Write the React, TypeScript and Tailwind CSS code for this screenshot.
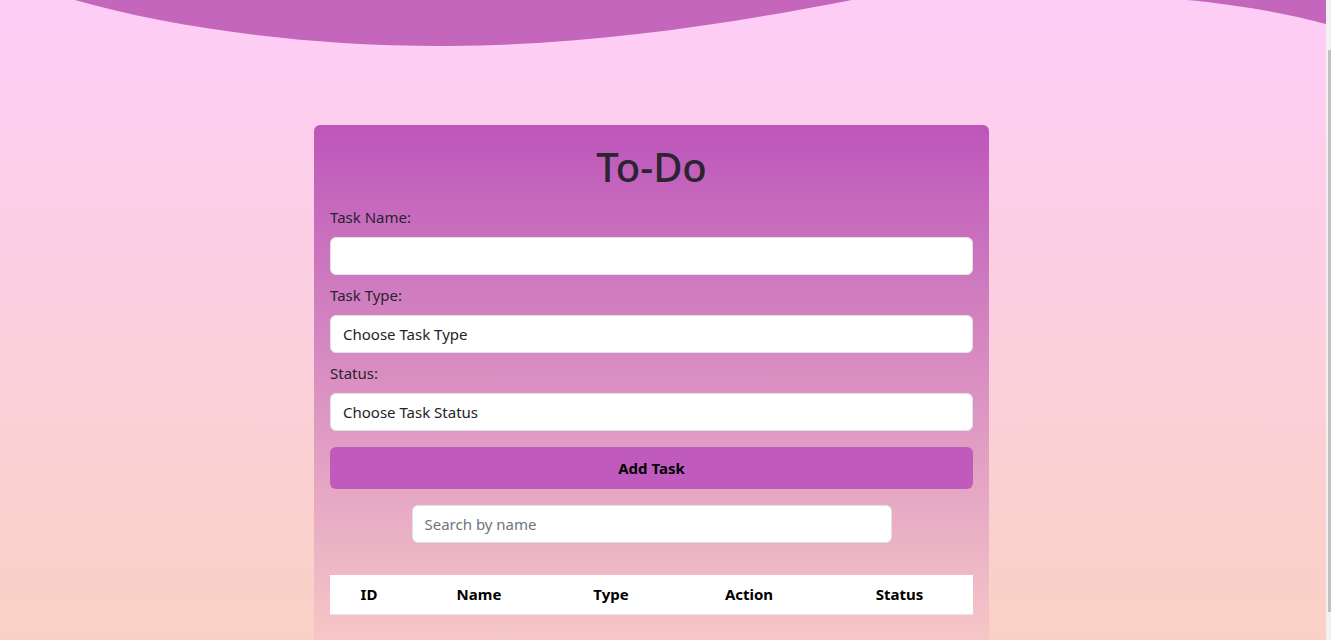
import React from "react";

const font = { fontFamily: '"Noto Sans", "Open Sans", sans-serif' };

export default function App() {
  return (
    <div className="flex w-[1331px] h-[640px] overflow-hidden" style={font}>
      <div className="relative w-[1326px] h-[640px] overflow-hidden bg-gradient-to-b from-[#fecdf7] to-[#f9d1c4]">
        <svg width="1326" height="50" viewBox="0 0 1326 50" preserveAspectRatio="none" className="block">
          <path
            d="M75,0 C180,30 320,47 450,46 C600,45 740,22 862,-2 L1180,-2 L1187,0 C1240,5 1290,14 1326,24 L1326,0 Z"
            fill="#c566bd"
          />
        </svg>
        <div className="ml-[314px] mt-[75px] w-[675px] h-[560px] rounded-t-[6px] bg-gradient-to-b from-[#bd55ba] to-[#fad0c6] px-4 pt-[18px]">
          <h1 className="text-center text-[40px] leading-[48px] font-medium text-[#2b2533]">To-Do</h1>
          <div className="mt-[14px] flex flex-col">
            <label className="text-[15px] leading-6 text-[#2a2230] mb-2">Task Name:</label>
            <div className="h-[38px] rounded-[6px] bg-white border border-[#dee2e6]" />
            <label className="mt-2 text-[15px] leading-6 text-[#2a2230] mb-2">Task Type:</label>
            <div className="h-[38px] rounded-[6px] bg-white border border-[#dee2e6] flex items-center px-3 text-[15px] text-[#212529]">
              Choose Task Type
            </div>
            <label className="mt-2 text-[15px] leading-6 text-[#2a2230] mb-2">Status:</label>
            <div className="h-[38px] rounded-[6px] bg-white border border-[#dee2e6] flex items-center px-3 text-[15px] text-[#212529]">
              Choose Task Status
            </div>
            <div className="mt-4 h-[42px] rounded-[6px] bg-[#c05bbd] flex items-center justify-center text-[15px] font-bold text-black">
              Add Task
            </div>
            <div className="mt-4 flex justify-center">
              <div className="w-[480px] h-[38px] rounded-[6px] bg-white border border-[#dee2e6] flex items-center px-3 text-[15px] text-[#6c757d]">
                Search by name
              </div>
            </div>
            <div className="mt-8 h-[40px] bg-white flex items-center text-[15px] font-bold text-black border-b border-[#e5e5e5]">
              <div className="w-[78px] text-center">ID</div>
              <div className="w-[142px] text-center">Name</div>
              <div className="w-[122px] text-center">Type</div>
              <div className="w-[154px] text-center">Action</div>
              <div className="w-[147px] text-center">Status</div>
            </div>
          </div>
        </div>
      </div>
      <div className="w-[5px] h-[640px] bg-[#f1f1f1] flex flex-col">
        <div className="h-[50px]" />
        <div className="ml-[2px] w-[3px] h-[562px] bg-[#c1c1c1]" />
      </div>
    </div>
  );
}
